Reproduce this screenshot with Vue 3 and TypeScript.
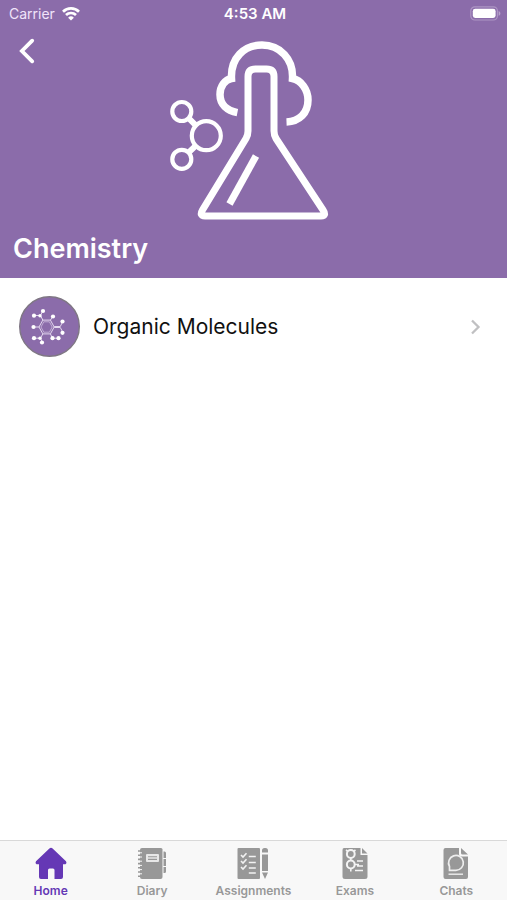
<script setup lang="ts">
import { ref } from 'vue'

interface Tab {
  id: string
  label: string
}

const tabs: Tab[] = [
  { id: 'home', label: 'Home' },
  { id: 'diary', label: 'Diary' },
  { id: 'assignments', label: 'Assignments' },
  { id: 'exams', label: 'Exams' },
  { id: 'chats', label: 'Chats' },
]
const topics: string[] = ['Organic Molecules']
const active = ref<string>('home')
</script>

<template>
  <div class="screen">
    <header class="hero">
      <div class="status">
        <div class="carrier">
          <span>Carrier</span>
          <svg width="18" height="14" viewBox="0 0 18 14" fill="none" stroke="#fff" stroke-width="2.7" aria-hidden="true">
            <path d="M1 4.700a11.400 11.400 0 0 1 16 0" />
            <path d="M4 8a7.200 7.200 0 0 1 10 0" />
            <path d="M9 13.600 6.100 10.700a4.200 4.200 0 0 1 5.800 0Z" fill="#fff" stroke="none" />
          </svg>
        </div>
        <time class="clock">4:53 AM</time>
        <svg class="battery" width="31" height="15" viewBox="0 0 31 15" aria-hidden="true">
          <rect x="0.8" y="0.8" width="26.6" height="13.2" rx="4" fill="none" stroke="#ad95c4" stroke-width="1.2" />
          <rect x="2.8" y="2.8" width="22.8" height="9.2" rx="2.4" fill="#fff" />
          <path d="M28.600 5c2.400.8 2.400 4 0 4.800Z" fill="#b7a2cc" />
        </svg>
      </div>
      <div class="banner">
        <button class="back" type="button" aria-label="Back">
          <svg width="18" height="28" viewBox="0 0 18 28" fill="none" stroke="#fff" stroke-width="3.800" stroke-linecap="round" stroke-linejoin="miter">
            <path d="M14.200 3.700 3.900 14l10.300 10.300" />
          </svg>
        </button>
        <svg class="art" width="181" height="187" viewBox="163 37 181 187" fill="none" stroke="#fff" aria-hidden="true">
          <path d="M237.400 112.600C227 110.600 220 104.500 220 94.500C220 86 225 79.500 231.500 78.500C230.500 58 244 45 262 45C280 45 293.500 59 292.500 78.500C301 80.500 308 89 308 100C308 113 299.500 121.500 286.500 122" stroke-width="7.500" />
          <path d="M248 131V76.500Q248 69 255.500 69H266.500Q274 69 274 76.500V131Q274 135 276 138.500L323 210Q327 216 321 216H205Q199 216 202.500 210L246 138.500Q248 135 248 131Z" stroke-width="7" stroke-linejoin="round" />
          <path d="m256 156-26.500 48" stroke-width="7" />
          <g stroke-width="4.200">
            <circle cx="181.800" cy="111.500" r="9.500" />
            <circle cx="206.300" cy="135.700" r="14.500" />
            <circle cx="181.800" cy="159.300" r="9.500" />
            <path d="m188.500 118 7.300 7.300M188.500 152.600l7.300-7" stroke-width="6" />
          </g>
        </svg>
      </div>
      <h1>Chemistry</h1>
    </header>

    <main>
      <ul class="topics">
        <li v-for="topic in topics" :key="topic">
          <a class="topic" href="#topic">
            <svg class="badge" width="61" height="61" viewBox="0 0 61 61" aria-hidden="true">
              <circle cx="30.500" cy="30.500" r="29.800" fill="#8b6caa" stroke="#7f7784" stroke-width="1.400" />
              <g fill="none" stroke="#e4d8ef" stroke-width="1">
                <path d="m20 31 3.800-6.900h7.600l3.800 6.900-3.800 6.900h-7.600Z" />
                <path d="m22 31 2.800-5.200h5.600l2.800 5.200-2.800 5.200h-5.600Z" stroke-width=".6" />
                <path d="M23.800 24.100 21.500 19.500h-6.800M21.500 19.500l2.500-5M31.400 24.100l3-4.200M35.200 30.500h6.100l2.700-5.500M35.200 31.500h6.100l2.700 5M20 31h-5.600M23.800 37.900 21.500 42.200h-6.800M21.500 42.200l1.800 4M31.400 37.900l2.100 4.300h6.500" />
              </g>
              <g fill="#fff">
                <circle cx="24" cy="15" r="2.100" /><circle cx="15" cy="19.700" r="2.100" /><circle cx="21" cy="19.700" r="1.700" />
                <circle cx="34" cy="20.500" r="2.100" /><circle cx="43.500" cy="25.500" r="2.100" /><circle cx="43.500" cy="36.800" r="2.100" />
                <circle cx="14.500" cy="31" r="2.100" /><circle cx="15" cy="42.200" r="2.100" /><circle cx="21" cy="42.200" r="1.700" />
                <circle cx="23" cy="46.500" r="2.100" /><circle cx="33.500" cy="42.200" r="2.100" /><circle cx="39.500" cy="42.200" r="2.100" />
              </g>
            </svg>
            <span class="name">{{ topic }}</span>
            <svg width="12" height="18" viewBox="0 0 12 18" fill="none" stroke="#c0c0c2" stroke-width="2.300" aria-hidden="true">
              <path d="m2 2.500 6.500 6.500-6.500 6.500" />
            </svg>
          </a>
        </li>
      </ul>
    </main>

    <nav class="tabs" aria-label="Main">
      <button v-for="tab in tabs" :key="tab.id" type="button" class="tab" :class="{ active: active === tab.id }" @click="active = tab.id">
        <svg width="34" height="34" viewBox="0 0 34 34" fill="currentColor" aria-hidden="true">
          <template v-if="tab.id === 'home'">
            <path d="M15.400 2.500Q17 1 18.600 2.500L32 15.200Q33.300 17 31.500 18.300H29V31Q29 33 27 33H20.500V24Q20.500 22.500 19 22.500H15.500Q14 22.500 14 24V33H7Q5 33 5 31V18.300H2.500Q.7 17 2 15.200Z" />
          </template>
          <template v-else-if="tab.id === 'diary'">
            <path d="M7 2H26Q27.500 2 27.500 3.500V31Q27.500 33 25.500 33H7Q5 33 5 31V4Q5 2 7 2Z" />
            <path d="M28.500 5.500H29.500Q31 5.500 31 7V12H28.500ZM28.500 13H31V20H28.500ZM28.500 21H31V25.500Q31 27 29.500 27H28.500Z" />
            <path d="M3 5h4M3 9.200h4M3 13.400h4M3 17.600h4M3 21.800h4M3 26h4M3 30.200h4" stroke="currentColor" stroke-width="1.600" />
            <path d="M5 6.800h2M5 11h2M5 15.200h2M5 19.400h2M5 23.600h2M5 27.800h2" stroke="#f8f8f8" stroke-width="1" />
            <rect x="11" y="8" width="13" height="8" rx="1" fill="#e7e7e7" />
            <path d="M13 10.700h9M13 13.400h9" stroke="currentColor" stroke-width="1.100" />
          </template>
          <template v-else-if="tab.id === 'assignments'">
            <rect x="1.500" y="2" width="22.500" height="31" rx="1" />
            <path d="m5 9 2 2 3.500-3.700M5 15l2 2 3.500-3.700M5 21l2 2 3.500-3.700" fill="none" stroke="#f2f2f2" stroke-width="1.600" />
            <path d="M12.800 10.500h7M12.800 16.500h7M12.800 22h7M12.800 27h7" stroke="#f2f2f2" stroke-width="1.700" />
            <path d="M26 6.500V4.500Q26 2 28.500 2H29.500Q32 2 32 4.500V6.500ZM26 8.500H32V25H26ZM26 26.500H32L29 33Z" />
          </template>
          <template v-else-if="tab.id === 'exams'">
            <path d="M6 2H22.500V9H29.500V30.500Q29.500 33 27 33H7Q4.500 33 4.500 30.500V4Q4.500 2 6 2ZM24 2 29.500 7.500H24Z" />
            <g fill="none" stroke="#f4f4f4" stroke-width="2">
              <circle cx="12.800" cy="8" r="3.900" />
              <circle cx="12.800" cy="18.500" r="3.900" />
              <path d="M8 4 10 5.500M17.500 4 15.500 5.500M12.800 11.500v3.500M8 18.500h1M12.800 22v3.500M16.500 18.500H21M19 15h6M19 20h6M17 24.500h8" stroke-width="1.600" />
            </g>
          </template>
          <template v-else>
            <path d="M6.500 2H20V8Q20 10.500 22.500 10.500H29V31Q29 33 27 33H6.500Q4.500 33 4.500 31V4Q4.500 2 6.500 2ZM22 2 29 8.500H23.500Q22 8.500 22 7Z" />
            <path d="M10.500 24.300V20.500A7.400 7.400 0 1 1 16.800 24.300Z" fill="none" stroke="#eee" stroke-width="1.700" />
            <path d="M9.500 28.200H24" stroke="#eee" stroke-width="1.400" />
          </template>
        </svg>
        <span>{{ tab.label }}</span>
      </button>
    </nav>
  </div>
</template>

<style>
body {
  margin: 0;
  background: #fff;
}
</style>

<style scoped>
.screen {
  min-height: 100vh;
  display: flex;
  flex-direction: column;
  font-family: Inter, "Liberation Sans", sans-serif;
  color: #111;
}
.hero {
  background: #8b6caa;
  color: #fff;
  padding-bottom: 11px;
}
.status {
  display: grid;
  grid-template-columns: 1fr auto 1fr;
  align-items: center;
  height: 27px;
  padding: 0 6px 0 9px;
  font-size: 14px;
}
.carrier {
  display: flex;
  align-items: center;
  gap: 7px;
  color: #f1e4fa;
}
.clock {
  font-size: 15px;
  font-weight: 600;
}
.battery {
  justify-self: end;
}
.banner {
  display: grid;
  grid-template-columns: 1fr auto 1fr;
  align-items: start;
  padding-top: 10px;
}
.back {
  justify-self: start;
  display: flex;
  margin: 0 0 0 10px;
  padding: 0 8px;
  border: 0;
  background: none;
  cursor: pointer;
}
.art {
  display: block;
}
h1 {
  margin: 7px 13px 0;
  font-size: 27px;
  line-height: 36px;
  font-weight: 600;
}
main {
  flex: 1;
}
.topics {
  list-style: none;
  margin: 0;
  padding: 0;
}
.topic {
  display: flex;
  align-items: center;
  gap: 13px;
  padding: 18px 25px 18px 19px;
  color: inherit;
  text-decoration: none;
}
.name {
  flex: 1;
  font-size: 21px;
  line-height: 26px;
}
.tabs {
  display: grid;
  grid-template-columns: repeat(5, 1fr);
  height: 60px;
  box-sizing: border-box;
  border-top: 1px solid #d9d9d9;
  background: #f8f8f8;
}
.tab {
  display: flex;
  flex-direction: column;
  align-items: center;
  gap: 3px;
  padding: 5px 0 0;
  border: 0;
  background: none;
  color: #989898;
  font-family: inherit;
  font-size: 12px;
  line-height: 16px;
  font-weight: 600;
  cursor: pointer;
}
.tab.active {
  color: #6538b5;
}
</style>
